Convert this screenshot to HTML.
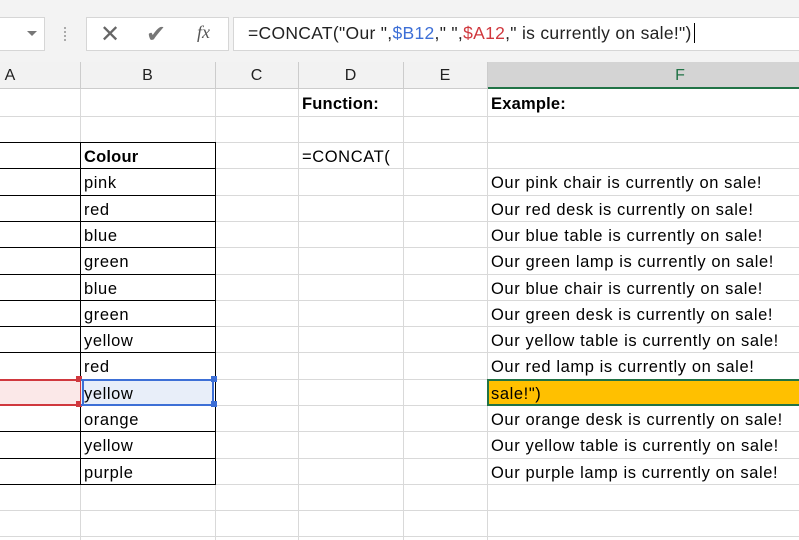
<!DOCTYPE html>
<html><head><style>
body{margin:0;width:799px;height:540px;overflow:hidden;background:#fff;font-family:"Liberation Sans",sans-serif;position:relative}
.a{position:absolute}
.t{position:absolute;font-size:16.5px;letter-spacing:0.6px;color:#000;line-height:26px;white-space:nowrap}
.h{position:absolute;height:1px;background:#d9d9d9}
.v{position:absolute;width:1px;background:#d9d9d9}
.k{position:absolute;background:#000}
.ch{position:absolute;top:63px;height:26px;line-height:26px;text-align:center;font-size:16px;color:#222}
</style></head><body>
<div class="a" style="left:0;top:0;width:799px;height:62px;background:#f3f3f3"></div>
<div class="a" style="left:0;top:17px;width:44px;height:32px;background:#fff;border:1px solid #d6d6d6;border-left:none"></div>
<div class="a" style="left:27px;top:31px;width:0;height:0;border-left:5px solid transparent;border-right:5px solid transparent;border-top:5px solid #777"></div>
<div class="a" style="left:64px;top:27px;width:2px;height:14px;border-left:2px dotted #aaa"></div>
<div class="a" style="left:86px;top:17px;width:141px;height:32px;background:#fff;border:1px solid #d6d6d6"></div>
<div class="a" style="left:100px;top:20px;font-size:24px;color:#666">✕</div>
<div class="a" style="left:146px;top:20px;font-size:24px;color:#777">✔</div>
<div class="a" style="left:197px;top:22px;font-size:18px;font-style:italic;font-family:'Liberation Serif',serif;color:#555">fx</div>
<div class="a" style="left:233px;top:17px;width:570px;height:32px;background:#fff;border:1px solid #d6d6d6"></div>
<div class="a" style="left:248px;top:23px;font-size:17.5px;letter-spacing:0.3px;color:#222;white-space:nowrap">=CONCAT("Our ",<span style="color:#3d6fd6">$B12</span>," ",<span style="color:#d0383e">$A12</span>," is currently on sale!")<span style="display:inline-block;width:1px;height:20px;background:#000;vertical-align:-4px;margin-left:2px"></span></div>
<div class="a" style="left:0;top:62px;width:799px;height:27px;background:#f2f2f2;border-bottom:1px solid #ccc;box-sizing:border-box"></div>
<div class="a" style="left:487px;top:62px;width:312px;height:27px;background:#d4d4d4;border-bottom:2px solid #217346;box-sizing:border-box"></div>
<div class="v" style="left:80px;top:62px;height:27px;background:#ccc"></div>
<div class="v" style="left:215px;top:62px;height:27px;background:#ccc"></div>
<div class="v" style="left:298px;top:62px;height:27px;background:#ccc"></div>
<div class="v" style="left:403px;top:62px;height:27px;background:#ccc"></div>
<div class="v" style="left:487px;top:62px;height:27px;background:#ccc"></div>
<div class="ch" style="left:0;width:20px">A</div>
<div class="ch" style="left:80px;width:135px">B</div>
<div class="ch" style="left:215px;width:83px">C</div>
<div class="ch" style="left:298px;width:105px">D</div>
<div class="ch" style="left:403px;width:84px">E</div>
<div class="ch" style="left:487px;width:386px;color:#217346">F</div>
<div class="v" style="left:80px;top:89px;height:451px"></div>
<div class="v" style="left:215px;top:89px;height:451px"></div>
<div class="v" style="left:298px;top:89px;height:451px"></div>
<div class="v" style="left:403px;top:89px;height:451px"></div>
<div class="v" style="left:487px;top:89px;height:451px"></div>
<div class="h" style="left:0;width:799px;top:116px"></div>
<div class="h" style="left:0;width:799px;top:142px"></div>
<div class="h" style="left:0;width:799px;top:168px"></div>
<div class="h" style="left:0;width:799px;top:195px"></div>
<div class="h" style="left:0;width:799px;top:221px"></div>
<div class="h" style="left:0;width:799px;top:247px"></div>
<div class="h" style="left:0;width:799px;top:274px"></div>
<div class="h" style="left:0;width:799px;top:300px"></div>
<div class="h" style="left:0;width:799px;top:326px"></div>
<div class="h" style="left:0;width:799px;top:352px"></div>
<div class="h" style="left:0;width:799px;top:379px"></div>
<div class="h" style="left:0;width:799px;top:405px"></div>
<div class="h" style="left:0;width:799px;top:431px"></div>
<div class="h" style="left:0;width:799px;top:458px"></div>
<div class="h" style="left:0;width:799px;top:484px"></div>
<div class="h" style="left:0;width:799px;top:510px"></div>
<div class="h" style="left:0;width:799px;top:536px"></div>
<div class="k" style="left:80px;top:142px;width:1px;height:343px"></div>
<div class="k" style="left:215px;top:142px;width:1px;height:343px"></div>
<div class="k" style="left:0;top:142px;width:216px;height:1px"></div>
<div class="k" style="left:0;top:168px;width:216px;height:1px"></div>
<div class="k" style="left:0;top:195px;width:216px;height:1px"></div>
<div class="k" style="left:0;top:221px;width:216px;height:1px"></div>
<div class="k" style="left:0;top:247px;width:216px;height:1px"></div>
<div class="k" style="left:0;top:274px;width:216px;height:1px"></div>
<div class="k" style="left:0;top:300px;width:216px;height:1px"></div>
<div class="k" style="left:0;top:326px;width:216px;height:1px"></div>
<div class="k" style="left:0;top:352px;width:216px;height:1px"></div>
<div class="k" style="left:0;top:379px;width:216px;height:1px"></div>
<div class="k" style="left:0;top:405px;width:216px;height:1px"></div>
<div class="k" style="left:0;top:431px;width:216px;height:1px"></div>
<div class="k" style="left:0;top:458px;width:216px;height:1px"></div>
<div class="k" style="left:0;top:484px;width:216px;height:1px"></div>
<div class="a" style="left:-2px;top:379px;width:80px;height:23px;background:#fbe8e8;border:2px solid #d0383e"></div>
<div class="a" style="left:76px;top:376px;width:6px;height:6px;background:#d0383e"></div>
<div class="a" style="left:76px;top:401px;width:6px;height:6px;background:#d0383e"></div>
<div class="a" style="left:81px;top:379px;width:131px;height:23px;background:#e8eef9;border:2px solid #3d6fd6;border-left:none"></div>
<div class="a" style="left:82px;top:379px;width:2px;height:26px;background:#3d6fd6"></div>
<div class="a" style="left:211px;top:376px;width:6px;height:6px;background:#3d6fd6"></div>
<div class="a" style="left:211px;top:401px;width:6px;height:6px;background:#3d6fd6"></div>
<div class="a" style="left:487px;top:379px;width:312px;height:23px;background:#ffc000;border:2px solid #217346;border-right:none"></div>
<div class="t" style="left:302px;top:91px;font-weight:bold;letter-spacing:0.2px">Function:</div>
<div class="t" style="left:491px;top:91px;font-weight:bold;letter-spacing:0.2px">Example:</div>
<div class="t" style="left:84px;top:144px;font-weight:bold;letter-spacing:0.2px">Colour</div>
<div class="t" style="left:302px;top:144px">=CONCAT(</div>
<div class="t" style="left:84px;top:170px">pink</div>
<div class="t" style="left:84px;top:197px">red</div>
<div class="t" style="left:84px;top:223px">blue</div>
<div class="t" style="left:84px;top:249px">green</div>
<div class="t" style="left:84px;top:276px">blue</div>
<div class="t" style="left:84px;top:302px">green</div>
<div class="t" style="left:84px;top:328px">yellow</div>
<div class="t" style="left:84px;top:354px">red</div>
<div class="t" style="left:84px;top:381px">yellow</div>
<div class="t" style="left:84px;top:407px">orange</div>
<div class="t" style="left:84px;top:433px">yellow</div>
<div class="t" style="left:84px;top:460px">purple</div>
<div class="t" style="left:491px;top:170px">Our pink chair is currently on sale!</div>
<div class="t" style="left:491px;top:197px">Our red desk is currently on sale!</div>
<div class="t" style="left:491px;top:223px">Our blue table is currently on sale!</div>
<div class="t" style="left:491px;top:249px">Our green lamp is currently on sale!</div>
<div class="t" style="left:491px;top:276px">Our blue chair is currently on sale!</div>
<div class="t" style="left:491px;top:302px">Our green desk is currently on sale!</div>
<div class="t" style="left:491px;top:328px">Our yellow table is currently on sale!</div>
<div class="t" style="left:491px;top:354px">Our red lamp is currently on sale!</div>
<div class="t" style="left:491px;top:381px">sale!")</div>
<div class="t" style="left:491px;top:407px">Our orange desk is currently on sale!</div>
<div class="t" style="left:491px;top:433px">Our yellow table is currently on sale!</div>
<div class="t" style="left:491px;top:460px">Our purple lamp is currently on sale!</div>
</body></html>
